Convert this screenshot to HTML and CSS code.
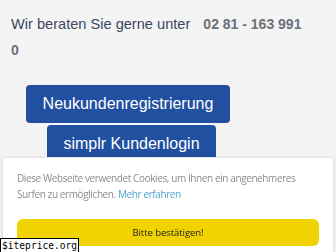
FILE: index.html
```html
<!DOCTYPE html>
<html lang="de">
<head>
    <meta charset="UTF-8">
    <meta name="viewport" content="width=device-width, initial-scale=1.0">
    <title>simplr</title>
    <link rel="stylesheet" href="styles.css">
</head>
<body>
    <div class="hotline">
        <span class="hotline-text">Wir beraten Sie gerne unter</span>
        <span class="hotline-phone">02 81 - 163 991 0</span>
    </div>

    <div class="actions">
        <a class="btn btn-register" href="#">Neukundenregistrierung</a>
        <a class="btn btn-login" href="#">simplr Kundenlogin</a>
    </div>

    <!-- Cookie-Hinweis -->
    <div class="cookieBar">
        <p class="cookieText">Diese Webseite verwendet Cookies, um Ihnen ein angenehmeres Surfen zu ermöglichen. <a href="#">Mehr erfahren</a></p>
        <button class="cookieBtn">Bitte bestätigen!</button>
    </div>

    <div class="stamp">$iteprice.org</div>
</body>
</html>
```

FILE: styles.css
```css
*{
    margin: 0;
    padding: 0;
    box-sizing: border-box;
}
body{
    width: 336px;
    height: 252px;
    overflow: hidden;
    background: #f4f4f4;
    font-family: "Liberation Sans", Arial, sans-serif;
}
.hotline{
    padding: 11px 30px 0 11px;
    font-size: 14.6px;
    line-height: 26px;
    color: #3b4761;
}
.hotline-phone{
    margin-left: 9px;
    font-size: 14px;
    font-weight: bold;
    color: #6c7079;
}
.actions{
    display: flex;
    flex-direction: column;
    align-items: flex-start;
    gap: 2px;
    margin-top: 22px;
}
.btn{
    display: block;
    height: 38px;
    line-height: 38px;
    text-align: center;
    font-size: 16px;
    color: #fff;
    text-decoration: none;
    background: #2150a0;
    border-radius: 4px;
}
.btn-register{
    width: 204px;
    margin-left: 26px;
}
.btn-login{
    width: 169px;
    margin-left: 47px;
}
/* Cookie-Leiste unten */
.cookieBar{
    position: fixed;
    left: 2px;
    right: 2px;
    bottom: 0;
    height: 95px;
    background: #fff;
    border: 1px solid #e2e2e2;
    border-bottom: none;
    padding: 12px 15px 0 14px;
    box-shadow: 0 0 3px rgba(0,0,0,.08);
}
.cookieText{
    font-family: "Open Sans", sans-serif;
    font-size: 10px;
    letter-spacing: -0.4px;
    line-height: 16px;
    color: #8c8c8c;
}
.cookieText a{
    color: #4da3cf;
    text-decoration: none;
}
.cookieBtn{
    display: block;
    width: 302px;
    height: 27px;
    margin-top: 17px;
    border: none;
    border-radius: 6px;
    background: #f0d300;
    font-family: "Open Sans", sans-serif;
    font-size: 9.6px;
    letter-spacing: -0.1px;
    color: #222;
}
.stamp{
    position: fixed;
    left: 0;
    bottom: 0;
    padding: 0 1px;
    background: #fff;
    border: 1px solid #000;
    border-bottom: none;
    font-family: "DejaVu Sans Mono", monospace;
    font-size: 9.6px;
    line-height: 13px;
    color: #000;
}
```
